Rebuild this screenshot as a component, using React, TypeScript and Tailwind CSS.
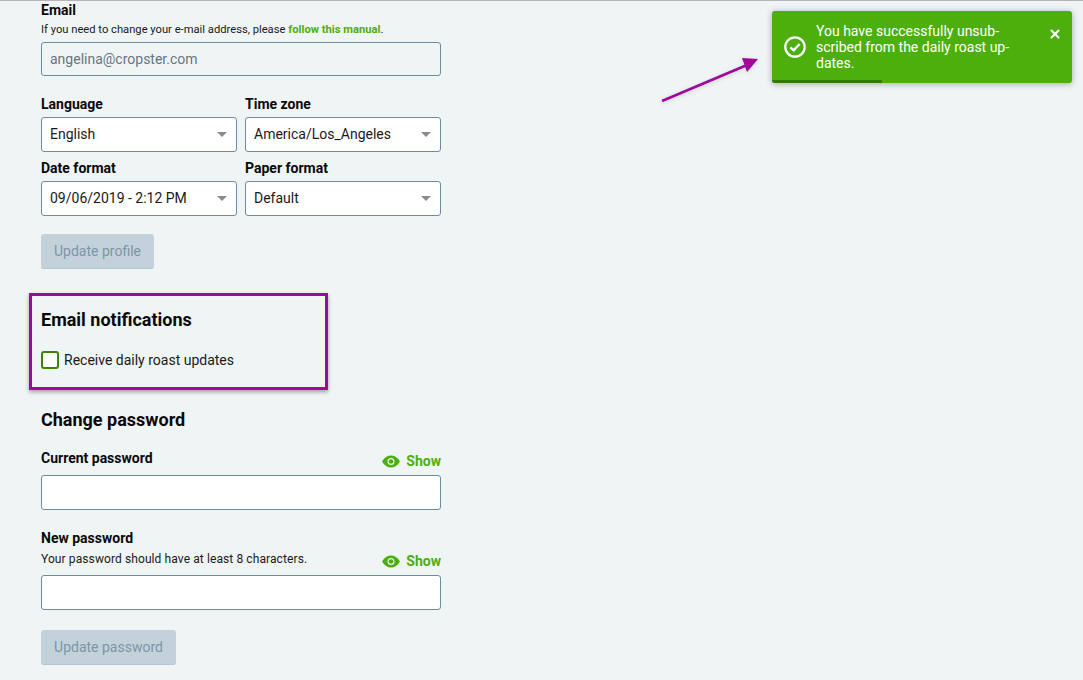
import React from "react";
import { X } from "lucide-react";

const SelectField = ({ label, value }: { label: string; value: string }) => {
  return (
    <div className="flex flex-col">
      <label className="text-sm font-bold leading-[20px] text-[#0a0a0a] mb-[3px]">{label}</label>
      <div className="h-[35px] flex items-center justify-between bg-white border border-[#6f8aa3] rounded-[3px] pl-2 pr-[9px]">
        <span className="text-sm text-[#1a1a1a] pb-[1px]">{value}</span>
        <span className="w-0 h-0 border-l-[5px] border-r-[5px] border-t-[5px] border-l-transparent border-r-transparent border-t-[#8b8b8b]" />
      </div>
    </div>
  );
};

const EyeIcon = () => {
  return (
    <svg width="18" height="19" viewBox="0 0 18 19" className="shrink-0">
      <path d="M0 9.5 C2.5 5.4 5.5 3.5 9 3.5 C12.5 3.5 15.5 5.4 18 9.5 C15.5 13.6 12.5 15.5 9 15.5 C5.5 15.5 2.5 13.6 0 9.5 Z" fill="#4caf0c" />
      <circle cx="9" cy="9.5" r="3.5" fill="#eff4f5" />
      <circle cx="9" cy="9.5" r="2.3" fill="#4caf0c" />
    </svg>
  );
};

const ShowToggle = () => {
  return (
    <div className="flex items-center gap-[6px] text-[#4caf0c] text-sm font-bold leading-[19px]">
      <EyeIcon />
      <span>Show</span>
    </div>
  );
};

const Toast = () => {
  return (
    <div className="absolute left-[772px] top-[10px] w-[300px] h-[72px] bg-[#4caf0c] rounded-[3px] shadow-[0_1px_6px_rgba(60,80,100,0.45)] overflow-hidden text-white">
      <div className="flex items-start h-full pl-3 pr-3 pt-[12px]">
        <svg width="22" height="22" viewBox="0 0 22 22" fill="none" className="mt-[13px] shrink-0">
          <circle cx="11" cy="11" r="9.7" stroke="white" strokeWidth="2.2" />
          <path d="M6.4 11.3 L9.7 14.4 L15.6 8" stroke="white" strokeWidth="2.4" />
        </svg>
        <p className="ml-[10px] w-[210px] text-sm leading-[16px]">
          You have successfully unsub-
          <br />
          scribed from the daily roast up-
          <br />
          dates.
        </p>
        <X size={14} strokeWidth={3.5} className="ml-auto mt-[4px] mr-[-2px]" />
      </div>
      <div className="absolute left-0 bottom-0 h-[3px] w-[110px] bg-[#35780a]" />
    </div>
  );
};

const Arrow = () => {
  return (
    <svg className="absolute left-[655px] top-[49px] drop-shadow-sm" width="110" height="60" viewBox="0 0 110 60" fill="none">
      <path d="M7 51 L92 15" stroke="#a0079b" strokeWidth="2.5" />
      <path d="M103 9 L87 8 L92 22 Z" fill="#a0079b" />
    </svg>
  );
};

export default function App() {
  return (
    <div
      className="relative w-[1083px] h-[680px] overflow-hidden bg-[#eff4f5] border-t border-[#b5b5b5]"
      style={{ fontFamily: "Roboto, sans-serif" }}
    >
      <div className="w-[400px] ml-[41px] flex flex-col">
        <label className="text-sm font-bold leading-[18px] text-[#0a0a0a]">Email</label>
        <p className="text-[11.2px] leading-[16px] mt-[3px] text-[#1a1a1a]">
          If you need to change your e-mail address, please{" "}
          <span className="text-[#4caf0c] font-bold">follow this manual</span>.
        </p>
        <div className="mt-[4px] h-[34px] flex items-center border border-[#6f8aa3] rounded-[3px] px-2 text-sm text-[#687480]">
          angelina@cropster.com
        </div>

        <div className="grid grid-cols-[196px_196px] gap-x-2 gap-y-[6px] mt-[18px]">
          <SelectField label="Language" value="English" />
          <SelectField label="Time zone" value="America/Los_Angeles" />
          <SelectField label="Date format" value="09/06/2019 - 2:12 PM" />
          <SelectField label="Paper format" value="Default" />
        </div>

        <button className="mt-[18px] w-[113px] h-[35px] bg-[#c3d2da] border-b border-[#b3c5cf] rounded-[3px] text-sm text-[#7e95a6]">
          Update profile
        </button>

        <section className="mt-[24px] -ml-3 w-[299px] h-[97px] border-[3px] border-[#a0079b] shadow-[0_2px_4px_rgba(0,0,0,0.35)] pl-[9px] pt-[13px]">
          <h2 className="text-lg font-bold leading-[22px] text-[#0a0a0a]">Email notifications</h2>
          <div className="flex items-center mt-[19px]">
            <span className="w-[18px] h-[18px] bg-white border-2 border-[#3d8500] rounded-[3px]" />
            <span className="ml-[5px] text-sm text-[#1a1a1a]">Receive daily roast updates</span>
          </div>
        </section>

        <h2 className="mt-[19px] text-lg font-bold leading-[22px] text-[#0a0a0a]">Change password</h2>

        <div className="flex items-end justify-between mt-[17px]">
          <label className="text-sm font-bold leading-[20px] text-[#0a0a0a] mb-[3px]">Current password</label>
          <ShowToggle />
        </div>
        <div className="mt-[4px] h-[35px] bg-white border border-[#6f8aa3] rounded-[3px]" />

        <label className="mt-[18px] text-sm font-bold leading-[20px] text-[#0a0a0a]">New password</label>
        <div className="flex items-end justify-between mt-[3px] h-[20px]">
          <p className="self-start text-xs leading-[16px] tracking-[0.1px] text-[#1a1a1a]">Your password should have at least 8 characters.</p>
          <ShowToggle />
        </div>
        <div className="mt-[4px] h-[35px] bg-white border border-[#6f8aa3] rounded-[3px]" />

        <button className="mt-[20px] w-[135px] h-[35px] bg-[#c3d2da] border-b border-[#b3c5cf] rounded-[3px] text-sm text-[#7e95a6]">
          Update password
        </button>
      </div>

      <Arrow />
      <Toast />
    </div>
  );
}
